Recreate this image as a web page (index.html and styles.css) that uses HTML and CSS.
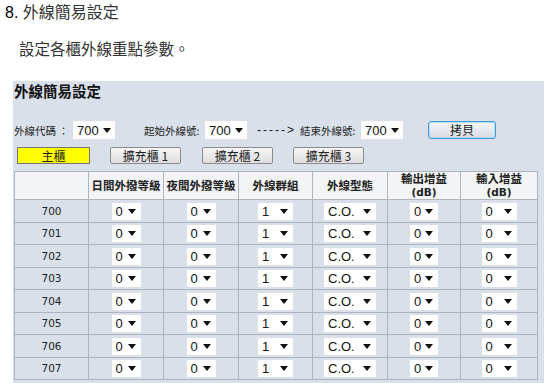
FILE: index.html
```html
<!DOCTYPE html>
<html lang="zh-Hant">
<head>
<meta charset="utf-8">
<title>外線簡易設定</title>
<link rel="stylesheet" href="styles.css">
</head>
<body>
<h1 class="heading"><span class="num">8.</span> 外線簡易設定</h1>
<p class="intro">設定各櫃外線重點參數。</p>
<section class="panel">
  <h2 class="panel-title">外線簡易設定</h2>
  <div class="controls">
    <span class="lbl lbl-code">外線代碼 ：</span>
    <span class="sel sel-top"><span>700</span><i class="tri"></i></span>
    <span class="lbl lbl-start">起始外線號:</span>
    <span class="sel sel-top"><span>700</span><i class="tri"></i></span>
    <span class="arrow">-----&gt;</span>
    <span class="lbl lbl-end">結束外線號:</span>
    <span class="sel sel-top"><span>700</span><i class="tri"></i></span>
    <button class="btn btn-copy">拷貝</button>
  </div>
  <div class="tabs">
    <button class="tab tab-main">主櫃</button>
    <button class="tab">擴充櫃 1</button>
    <button class="tab">擴充櫃 2</button>
    <button class="tab">擴充櫃 3</button>
  </div>
  <table class="grid">
    <colgroup>
      <col class="c1"><col class="c2"><col class="c3"><col class="c4"><col class="c5"><col class="c6"><col class="c7">
    </colgroup>
    <thead>
      <tr>
        <th></th>
        <th>日間外撥等級</th>
        <th>夜間外撥等級</th>
        <th>外線群組</th>
        <th>外線型態</th>
        <th>輸出增益<br><span class="db">(dB)</span></th>
        <th>輸入增益<br><span class="db">(dB)</span></th>
      </tr>
    </thead>
    <tbody id="rows"></tbody>
  </table>
</section>
<script src="script.js"></script>
</body>
</html>
```

FILE: script.js
```js
(function () {
  var tb = document.getElementById('rows');
  function sel(cls, txt) {
    return '<span class="sel ' + cls + '"><span>' + txt + '</span><i class="tri"></i></span>';
  }
  var html = '';
  for (var i = 700; i <= 707; i++) {
    html += '<tr><td class="no">' + i + '</td>' +
      '<td>' + sel('w29', '0') + '</td>' +
      '<td>' + sel('w29', '0') + '</td>' +
      '<td>' + sel('w35', '1') + '</td>' +
      '<td>' + sel('w52', 'C.O.') + '</td>' +
      '<td>' + sel('w28', '0') + '</td>' +
      '<td>' + sel('w35', '0') + '</td></tr>';
  }
  tb.innerHTML = html;
})();
```

FILE: styles.css
```css
html, body {
  margin: 0;
  padding: 0;
  background: #ffffff;
  overflow: hidden;
}
body {
  font-family: "Liberation Sans", "Noto Sans CJK TC", sans-serif;
  color: #222;
}
.heading {
  margin: 0;
  padding: 3px 0 0 5px;
  font-size: 16px;
  line-height: 20px;
  font-weight: normal;
  color: #333;
}
.heading .num {
  color: #000;
}
.intro {
  margin: 17px 0 0 0;
  padding-left: 19px;
  font-size: 15.5px;
  line-height: 20px;
  color: #333;
}
.panel {
  margin: 21px 0 0 13px;
  padding: 0 0 40px 1px;
  background: #d9e0ea;
}
.panel-title {
  margin: 0;
  font-size: 14.5px;
  line-height: 20px;
  font-weight: bold;
  color: #111;
  font-family: "Noto Sans CJK TC", sans-serif;
}
.controls {
  display: flex;
  align-items: center;
  height: 18px;
  margin-top: 20px;
}
.lbl {
  font-family: "Noto Sans CJK TC", sans-serif;
  font-size: 10.5px;
  color: #222;
  white-space: nowrap;
  flex: none;
}
.lbl-code { width: 59px; }
.lbl-start { width: 61px; margin-left: 29px; }
.lbl-end { width: 61px; }
.arrow {
  flex: none;
  width: 43px;
  margin-left: 10px;
  font-size: 12px;
  color: #222;
  letter-spacing: 2px;
  white-space: nowrap;
}
.sel {
  flex: none;
  display: inline-flex;
  align-items: center;
  justify-content: space-between;
  box-sizing: border-box;
  height: 17px;
  padding: 0 5px 0 4px;
  background: #fff;
  font-family: "Liberation Sans", sans-serif;
  font-size: 13px;
  color: #111;
  vertical-align: middle;
}
.sel-top { width: 42px; height: 18px; padding-right: 4px; }
.tri {
  display: block;
  width: 0;
  height: 0;
  border-left: 4px solid transparent;
  border-right: 4px solid transparent;
  border-top: 5px solid #111;
}
.btn, .tab {
  flex: none;
  box-sizing: border-box;
  margin: 0;
  padding: 0;
  font-family: "Noto Sans CJK TC", sans-serif;
  font-size: 12px;
  line-height: 1;
  color: #222;
  background: linear-gradient(#f6f6f6, #dddddd);
  border: 1px solid #8c8c8c;
  border-radius: 3px;
}
.btn-copy {
  width: 68px;
  height: 18px;
  margin-left: 25px;
  border-color: #3d9be0;
  box-shadow: inset 0 0 0 1px #b9dcf5;
  background: linear-gradient(#f4f7fa, #d9dde2);
}
.tabs {
  display: flex;
  gap: 20px;
  margin: 8px 0 0 3px;
  height: 17px;
}
.tab {
  width: 71px;
  height: 17px;
  border-radius: 2px;
}
.tabs .tab:nth-child(3) { margin-left: 1px; }
.tab-main {
  width: 73px;
  background: #ffff00;
  border-color: #777;
  border-radius: 0;
}
.grid {
  margin-top: 7px;
  border-collapse: collapse;
  table-layout: fixed;
  width: 523px;
}
.c1 { width: 74px; }
.c2 { width: 75px; }
.c3 { width: 75px; }
.c4 { width: 74px; }
.c5 { width: 75px; }
.c6 { width: 73px; }
.c7 { width: 77px; }
.grid th, .grid td {
  border: 1px solid #acb4be;
  padding: 0;
  text-align: center;
}
.grid thead tr { height: 28px; }
.grid th {
  background: #f3f4f6;
  font-family: "Noto Sans CJK TC", sans-serif;
  font-weight: bold;
  font-size: 11.5px;
  line-height: 13px;
  color: #222;
}
.grid th .db {
  font-family: "DejaVu Sans", sans-serif;
  font-size: 10.5px;
  line-height: 14px;
}
.grid tbody tr { height: 22.5px; }
.grid td {
  background: #d9e0ea;
}
.grid td.no {
  font-family: "DejaVu Sans", sans-serif;
  font-size: 10.5px;
  color: #222;
}
.w28 { width: 28px; }
.w29 { width: 29px; }
.w35 { width: 35px; }
.w52 { width: 52px; }
```
